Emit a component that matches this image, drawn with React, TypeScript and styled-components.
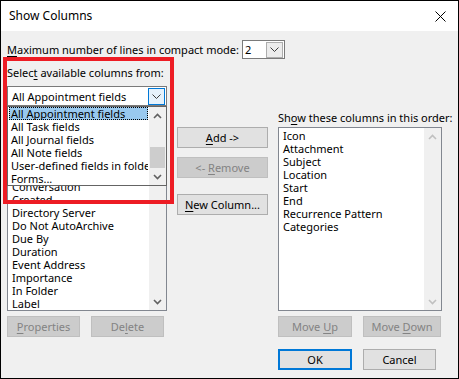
import React from "react";
import styled, { createGlobalStyle } from "styled-components";

const GlobalStyle = createGlobalStyle`
  html, body {
    margin: 0;
    padding: 0;
    background: #ffffff;
  }
  body {
    font-family: "Noto Sans", "Open Sans", sans-serif;
    font-size: 11px;
    color: #000000;
  }
`;

const hiddenRows = 5;

const availableFields = [
  "Conversation",
  "Created",
  "Directory Server",
  "Do Not AutoArchive",
  "Due By",
  "Duration",
  "Event Address",
  "Importance",
  "In Folder",
  "Label",
  "Last Modified",
];

const fieldSets = [
  "All Appointment fields",
  "All Task fields",
  "All Journal fields",
  "All Note fields",
  "User-defined fields in folder",
  "Forms...",
];

const shownColumns = [
  "Icon",
  "Attachment",
  "Subject",
  "Location",
  "Start",
  "End",
  "Recurrence Pattern",
  "Categories",
];

const Window = styled.div`
  position: relative;
  width: 459px;
  height: 379px;
  box-sizing: border-box;
  border: 1px solid #000000;
  background: #f0f0f0;
  display: flex;
  flex-direction: column;
  overflow: hidden;
`;

const TitleBar = styled.div`
  height: 30px;
  background: #ffffff;
  display: flex;
  align-items: center;
  justify-content: space-between;
  padding: 0 12px 0 8px;
  flex-shrink: 0;
  font-size: 12px;
`;

const Title = styled.span`
  line-height: 14px;
`;

const Body = styled.div`
  flex: 1;
  padding: 9px 0 0 6px;
  display: flex;
  flex-direction: column;
`;

const TopRow = styled.div`
  display: flex;
  align-items: center;
  gap: 3px;
  height: 19px;
`;

const Label = styled.div<{ $top?: number }>`
  line-height: 14px;
  white-space: nowrap;
  margin-top: ${(p) => p.$top ?? 0}px;
`;

const Key = styled.span`
  text-decoration: underline;
  text-underline-offset: 2px;
`;

const SmallCombo = styled.div`
  width: 43px;
  height: 19px;
  box-sizing: border-box;
  border: 1px solid #7a7a7a;
  background: #ffffff;
  display: flex;
  align-items: center;
  justify-content: space-between;
  padding: 0 1px 0 2px;
`;

const ComboButton = styled.div<{ $active?: boolean }>`
  width: 17px;
  height: ${(p) => (p.$active ? 17 : 16)}px;
  box-sizing: border-box;
  border: 1px solid ${(p) => (p.$active ? "#0078d7" : "#adadad")};
  background: ${(p) => (p.$active ? "#e5f1fb" : "#ececec")};
  display: flex;
  align-items: center;
  justify-content: center;
`;

const Columns = styled.div`
  display: flex;
  align-items: flex-start;
  margin-top: 7px;
`;

const LeftCol = styled.div`
  width: 160px;
  display: flex;
  flex-direction: column;
`;

const MidCol = styled.div`
  width: 91px;
  margin-left: 10px;
  padding-top: 61px;
  display: flex;
  flex-direction: column;
`;

const RightCol = styled.div`
  width: 164px;
  margin-left: 10px;
  display: flex;
  flex-direction: column;
`;

const ComboWrap = styled.div`
  position: relative;
  margin-top: 6px;
`;

const Combo = styled.div`
  height: 20px;
  box-sizing: border-box;
  border: 1px solid #7a7a7a;
  background: #ffffff;
  display: flex;
  align-items: center;
  justify-content: space-between;
  padding: 0 1px 0 4px;
`;

const DropList = styled.div`
  position: absolute;
  left: 0;
  top: 100%;
  width: 160px;
  height: 80px;
  box-sizing: border-box;
  border: 1px solid #646464;
  background: #ffffff;
  display: flex;
  z-index: 2;
`;

const DropItems = styled.div`
  flex: 1;
  min-width: 0;
  overflow: hidden;
`;

const DropItem = styled.div<{ $selected?: boolean }>`
  height: 13px;
  line-height: 13px;
  box-sizing: border-box;
  padding-left: 2px;
  margin: 0 1px;
  white-space: nowrap;
  overflow: hidden;
  background: ${(p) => (p.$selected ? "#99c9ef" : "transparent")};
  outline: ${(p) => (p.$selected ? "1px dotted #000000" : "none")};
  outline-offset: -1px;
`;

const ListBox = styled.div<{ $height: number; $top: number }>`
  height: ${(p) => p.$height}px;
  margin-top: ${(p) => p.$top}px;
  box-sizing: border-box;
  border: 1px solid #828790;
  background: #ffffff;
  display: flex;
  overflow: hidden;
`;

const ListItems = styled.div<{ $offset?: number }>`
  flex: 1;
  padding: ${(p) => 1 + (p.$offset ?? 0) * 13}px 0 0 4px;
  overflow: hidden;
`;

const ListItem = styled.div`
  height: 13px;
  line-height: 13px;
  white-space: nowrap;
`;

const ScrollBar = styled.div`
  width: 17px;
  background: #f0f0f0;
  display: flex;
  flex-direction: column;
  flex-shrink: 0;
`;

const ScrollArrow = styled.div`
  height: 17px;
  display: flex;
  align-items: center;
  justify-content: center;
  flex-shrink: 0;
`;

const ScrollTrack = styled.div`
  flex: 1;
  display: flex;
  flex-direction: column;
  justify-content: flex-end;
  padding: 0 1px;
`;

const Thumb = styled.div`
  height: 21px;
  background: #cdcdcd;
`;

const ButtonRow = styled.div<{ $top: number; $gap: number }>`
  display: flex;
  gap: ${(p) => p.$gap}px;
  margin-top: ${(p) => p.$top}px;
`;

const Button = styled.div<{
  $width?: number;
  $top?: number;
  $disabled?: boolean;
  $default?: boolean;
}>`
  width: ${(p) => p.$width ?? 91}px;
  height: 21px;
  margin-top: ${(p) => p.$top ?? 0}px;
  box-sizing: border-box;
  border: ${(p) =>
    p.$default
      ? "2px solid #0078d7"
      : p.$disabled
      ? "1px solid #bfbfbf"
      : "1px solid #adadad"};
  background: ${(p) => (p.$disabled ? "#cccccc" : "#e1e1e1")};
  color: ${(p) => (p.$disabled ? "#838383" : "#000000")};
  display: flex;
  align-items: center;
  justify-content: center;
  white-space: nowrap;
  line-height: 14px;
`;

const Highlight = styled.div`
  position: absolute;
  left: 2px;
  top: 56px;
  width: 171px;
  height: 147px;
  box-sizing: border-box;
  border: 4px solid #ed1c24;
  pointer-events: none;
  z-index: 3;
`;

const Chevron = ({ up, color = "#606060" }: { up?: boolean; color?: string }) => (
  <svg width="9" height="6" viewBox="0 0 9 6">
    <path
      d={up ? "M1 5 L4.5 1.5 L8 5" : "M1 1 L4.5 4.5 L8 1"}
      fill="none"
      stroke={color}
      strokeWidth="1.6"
    />
  </svg>
);

const ComboChevron = () => (
  <svg width="9" height="5" viewBox="0 0 9 5">
    <path d="M0.5 0.5 L4.5 4.5 L8.5 0.5" fill="none" stroke="#3c3c3c" strokeWidth="1" />
  </svg>
);

const CloseIcon = () => (
  <svg width="11" height="11" viewBox="0 0 11 11">
    <path d="M0.5 0.5 L10.5 10.5 M10.5 0.5 L0.5 10.5" stroke="#000000" strokeWidth="1" />
  </svg>
);

export default function App() {
  return (
    <>
      <GlobalStyle />
      <Window>
        <TitleBar>
          <Title>Show Columns</Title>
          <CloseIcon />
        </TitleBar>
        <Body>
          <TopRow>
            <Label>
              <Key>M</Key>aximum number of lines in compact mode:
            </Label>
            <SmallCombo>
              <span>2</span>
              <ComboButton>
                <ComboChevron />
              </ComboButton>
            </SmallCombo>
          </TopRow>

          <Columns>
            <LeftCol>
              <Label>
                Selec<Key>t</Key> available columns from:
              </Label>
              <ComboWrap>
                <Combo>
                  <span>All Appointment fields</span>
                  <ComboButton $active>
                    <ComboChevron />
                  </ComboButton>
                </Combo>
                <DropList>
                  <DropItems>
                    {fieldSets.map((f, i) => (
                      <DropItem key={f} $selected={i === 0}>
                        {f}
                      </DropItem>
                    ))}
                  </DropItems>
                  <ScrollBar>
                    <ScrollArrow>
                      <Chevron up />
                    </ScrollArrow>
                    <ScrollTrack>
                      <Thumb />
                    </ScrollTrack>
                    <ScrollArrow>
                      <Chevron />
                    </ScrollArrow>
                  </ScrollBar>
                </DropList>
              </ComboWrap>
              <ListBox $height={198} $top={7}>
                <ListItems $offset={hiddenRows}>
                  {availableFields.map((f) => (
                    <ListItem key={f}>{f}</ListItem>
                  ))}
                </ListItems>
                <ScrollBar>
                  <ScrollArrow>
                    <Chevron up />
                  </ScrollArrow>
                  <ScrollTrack />
                  <ScrollArrow>
                    <Chevron />
                  </ScrollArrow>
                </ScrollBar>
              </ListBox>
              <ButtonRow $top={5} $gap={11}>
                <Button $width={73} $disabled>
                  <span>
                    <Key>P</Key>roperties
                  </span>
                </Button>
                <Button $width={73} $disabled>
                  <span>
                    De<Key>l</Key>ete
                  </span>
                </Button>
              </ButtonRow>
            </LeftCol>

            <MidCol>
              <Button>
                <span>
                  <Key>A</Key>dd -&gt;
                </span>
              </Button>
              <Button $top={9} $disabled>
                <span>
                  &lt;- <Key>R</Key>emove
                </span>
              </Button>
              <Button $top={16}>
                <span>
                  <Key>N</Key>ew Column...
                </span>
              </Button>
            </MidCol>

            <RightCol>
              <Label $top={45}>
                Sh<Key>o</Key>w these columns in this order:
              </Label>
              <ListBox $height={184} $top={2}>
                <ListItems>
                  {shownColumns.map((c) => (
                    <ListItem key={c}>{c}</ListItem>
                  ))}
                </ListItems>
                <ScrollBar>
                  <ScrollArrow>
                    <Chevron up color="#c0c0c0" />
                  </ScrollArrow>
                  <ScrollTrack />
                  <ScrollArrow>
                    <Chevron color="#c0c0c0" />
                  </ScrollArrow>
                </ScrollBar>
              </ListBox>
              <ButtonRow $top={5} $gap={11}>
                <Button $width={74} $disabled>
                  <span>
                    Move <Key>U</Key>p
                  </span>
                </Button>
                <Button $width={78} $disabled>
                  <span>
                    Move <Key>D</Key>own
                  </span>
                </Button>
              </ButtonRow>
              <ButtonRow $top={12} $gap={11}>
                <Button $width={74} $default>
                  OK
                </Button>
                <Button $width={73}>Cancel</Button>
              </ButtonRow>
            </RightCol>
          </Columns>
        </Body>
        <Highlight />
      </Window>
    </>
  );
}
